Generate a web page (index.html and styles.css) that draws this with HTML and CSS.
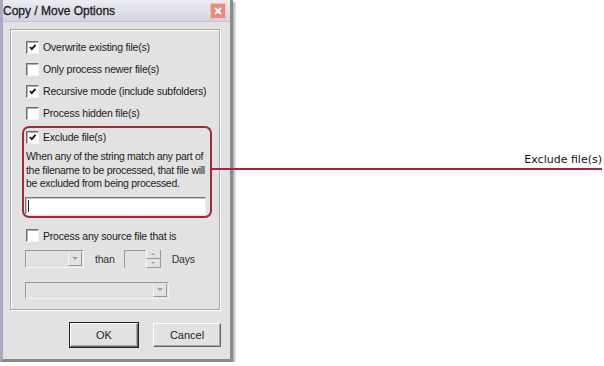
FILE: index.html
```html
<!DOCTYPE html>
<html lang="en">
<head>
    <meta charset="UTF-8">
    <title>Copy / Move Options</title>
    <link rel="stylesheet" href="styles.css">
</head>
<body>

    <div class="window">
        <!-- Title bar -->
        <div class="titlebar">
            <span class="title">Copy / Move Options</span>
            <span class="close">
                <svg width="8" height="8" viewBox="0 0 8 8"><path d="M1 1L7 7M7 1L1 7" stroke="#fff" stroke-width="1.8"/></svg>
            </span>
        </div>

        <div class="client">
            <div class="group">
                <div class="row"><span class="check on"></span>Overwrite existing file(s)</div>
                <div class="row"><span class="check"></span>Only process newer file(s)</div>
                <div class="row"><span class="check on"></span>Recursive mode (include subfolders)</div>
                <div class="row"><span class="check"></span>Process hidden file(s)</div>

                <!-- Highlighted section -->
                <div class="exclude">
                    <div class="row short"><span class="check on"></span>Exclude file(s)</div>
                    <p class="note">When any of the string match any part of the filename to be processed, that file will be excluded from being processed.</p>
                    <div class="textbox"><span class="caret"></span></div>
                    <div class="callout"><span>Exclude file(s)</span></div>
                </div>

                <div class="row short spaced"><span class="check"></span>Process any source file that is</div>

                <div class="age-row">
                    <div class="combo small"><span class="drop"></span></div>
                    <span class="word">than</span>
                    <div class="spin">
                        <span class="spin-field"></span>
                        <span class="spin-btns">
                            <span class="spin-up"></span>
                            <span class="spin-down"></span>
                        </span>
                    </div>
                    <span class="word">Days</span>
                </div>

                <div class="combo wide"><span class="drop"></span></div>
            </div>

            <div class="button-group">
                <button type="button" class="default">OK</button>
                <button type="button">Cancel</button>
            </div>
        </div>
    </div>

</body>
</html>
```

FILE: styles.css
```css
body {
    margin: 0;
    background: #fff;
    font-family: "Liberation Sans", Arial, sans-serif;
    font-size: 10.5px;
    letter-spacing: -0.2px;
    color: #1a1a1a;
}

.window {
    width: 227px;
    height: 359px;
    background: #e2e2e2;
    border-left: 3px solid #a9abc2;
    border-right: 3px solid #8a8a92;
    border-bottom: 3px solid #8a8a92;
    box-shadow: 2px 2px 2px #b0b0b0;
}

.titlebar {
    height: 22px;
    display: flex;
    align-items: center;
    justify-content: space-between;
    padding: 0 4px 0 0;
    background: linear-gradient(#ececf4, #d4d4e0);
    border-bottom: 1px solid #c4c4d0;
    box-sizing: border-box;
}

.title {
    font-size: 12px;
    letter-spacing: 0;
    color: #1c1c1c;
    -webkit-text-stroke: 0.3px #1c1c1c;
}

.close {
    width: 16px;
    height: 16px;
    background: #ec8a80;
    border: 1px solid #f4c0b8;
    box-sizing: border-box;
    display: flex;
    align-items: center;
    justify-content: center;
}

.client {
    padding: 7px 0 0 7px;
}

.group {
    width: 208px;
    margin-right: 10px;
    border: 1px solid #a8a8a8;
    box-shadow: inset 1px 1px #fff, 1px 1px #fff;
    padding: 6px 0 10px 0;
}

.row {
    height: 22px;
    display: flex;
    align-items: center;
    padding-left: 15px;
    white-space: nowrap;
}

.row.short {
    height: 18px;
}

.row.spaced {
    margin-top: 9px;
}

.check {
    width: 11px;
    height: 11px;
    margin-right: 4px;
    flex-shrink: 0;
    background: #fff center / 9px 9px no-repeat;
    border-top: 1px solid #6e6e6e;
    border-left: 1px solid #6e6e6e;
    border-right: 1px solid #f4f4f4;
    border-bottom: 1px solid #f4f4f4;
    box-shadow: inset 1px 1px #b4b4b4;
}

.check.on {
    background-image: url("data:image/svg+xml,%3Csvg xmlns='http://www.w3.org/2000/svg' viewBox='0 0 9 9'%3E%3Cpath d='M2 4 L3.8 6.2 L7.5 1.8' fill='none' stroke='%23111' stroke-width='1.8'/%3E%3C/svg%3E");
}

.exclude {
    position: relative;
    margin: 2px 7px 0 11px;
    border: 2px solid #a3283c;
    border-radius: 7px;
    padding: 0 4px 1px 1px;
}

.exclude .row {
    padding-left: 1px;
}

.note {
    margin: 4px 0 0 1px;
    line-height: 13.5px;
    font-size: 10.5px;
    letter-spacing: -0.3px;
    color: #222;
}

.textbox {
    margin-top: 6px;
    height: 18px;
    background: #fff;
    border-top: 1px solid #777;
    border-left: 1px solid #777;
    border-right: 1px solid #f0f0f0;
    border-bottom: 1px solid #f0f0f0;
    box-shadow: inset 1px 1px #c4c4c4;
    box-sizing: border-box;
    display: flex;
    align-items: center;
    padding-left: 2px;
}

.caret {
    width: 1px;
    height: 12px;
    background: #222;
}

/* callout line running out to the label */
.callout {
    position: absolute;
    left: 100%;
    top: 28px;
    width: 392px;
    height: 12px;
    border-bottom: 2px solid #a3283c;
    display: flex;
    justify-content: flex-end;
    align-items: flex-end;
}

.callout span {
    font-family: "DejaVu Sans", Verdana, sans-serif;
    font-size: 11px;
    letter-spacing: 0;
    color: #111;
    line-height: 12px;
    padding-bottom: 2px;
    white-space: nowrap;
}

.age-row {
    display: flex;
    align-items: center;
    margin: 5px 0 0 14px;
    height: 18px;
}

.word {
    margin: 0 9px 0 11px;
    color: #333;
}

.combo {
    height: 18px;
    box-sizing: border-box;
    border-top: 1px solid #999;
    border-left: 1px solid #999;
    border-right: 1px solid #f4f4f4;
    border-bottom: 1px solid #f4f4f4;
    display: flex;
    justify-content: flex-end;
    padding: 1px;
}

.combo.small {
    width: 59px;
}

.combo.wide {
    width: 144px;
    margin: 14px 0 0 14px;
    height: 17px;
}

.drop {
    width: 14px;
    border-left: 1px solid #f8f8f8;
    border-right: 1px solid #999;
    border-bottom: 1px solid #999;
    box-sizing: border-box;
    display: flex;
    align-items: center;
    justify-content: center;
}

.drop::after {
    content: '';
    border-left: 3px solid transparent;
    border-right: 3px solid transparent;
    border-top: 3px solid #a0a0a0;
}

.spin {
    display: flex;
    height: 18px;
}

.spin-field {
    width: 22px;
    box-sizing: border-box;
    border-top: 1px solid #999;
    border-left: 1px solid #999;
}

.spin-btns {
    width: 15px;
    display: flex;
    flex-direction: column;
    border-right: 1px solid #999;
    box-sizing: border-box;
}

.spin-up,
.spin-down {
    flex: 1;
    display: flex;
    align-items: center;
    justify-content: center;
    border-left: 1px solid #f8f8f8;
    border-bottom: 1px solid #999;
}

.spin-up::after {
    content: '';
    border-left: 2px solid transparent;
    border-right: 2px solid transparent;
    border-bottom: 2px solid #a0a0a0;
}

.spin-down::after {
    content: '';
    border-left: 2px solid transparent;
    border-right: 2px solid transparent;
    border-top: 2px solid #a0a0a0;
}

.button-group {
    display: flex;
    justify-content: flex-end;
    gap: 15px;
    margin: 13px 9px 0 0;
}

button {
    width: 68px;
    height: 24px;
    font-family: "Liberation Sans", Arial, sans-serif;
    font-size: 11px;
    color: #222;
    background: #e2e2e2;
    border-top: 1px solid #fff;
    border-left: 1px solid #fff;
    border-right: 1px solid #666;
    border-bottom: 1px solid #666;
    box-shadow: inset -1px -1px #a8a8a8;
    padding: 0;
}

button.default {
    outline: 1px solid #222;
    outline-offset: 0;
}
```
